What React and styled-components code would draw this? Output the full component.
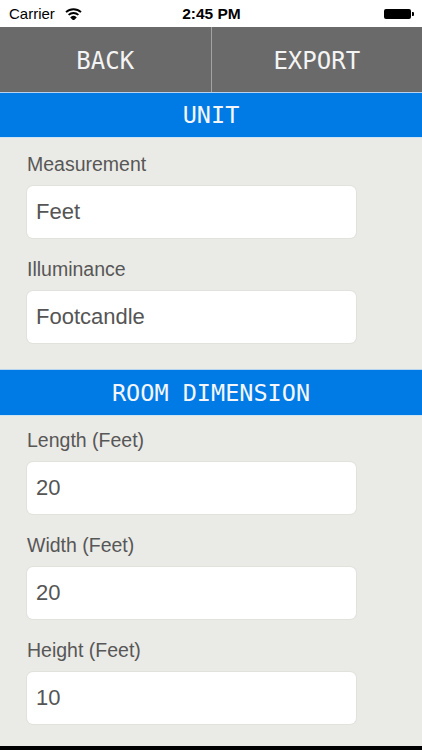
import React from "react";
import styled, { createGlobalStyle } from "styled-components";

const Global = createGlobalStyle`
  html, body { margin: 0; padding: 0; background: #000; }
  body { font-family: "Liberation Sans", Arial, sans-serif; }
  * { box-sizing: border-box; }
`;

const Screen = styled.div`
  width: 422px;
  height: 746px;
  overflow: hidden;
  background: #eaeae6;
  display: flex;
  flex-direction: column;
`;

const StatusBar = styled.div`
  height: 27px;
  flex: none;
  background: #fff;
  display: grid;
  grid-template-columns: 1fr auto 1fr;
  align-items: center;
  padding: 0 8px 0 9px;
  font-size: 15px;
  color: #000;
`;

const Carrier = styled.div`
  display: flex;
  align-items: center;
  gap: 10px;
`;

const Time = styled.div`
  font-weight: bold;
  font-size: 15.5px;
`;

const Battery = styled.div`
  justify-self: end;
  display: flex;
  align-items: center;
  gap: 1px;
`;

const BatteryBody = styled.div`
  width: 27px;
  height: 10px;
  background: #000;
  border-radius: 2px;
`;

const BatteryTip = styled.div`
  width: 2px;
  height: 4px;
  background: #000;
  border-radius: 0 1px 1px 0;
`;

const Toolbar = styled.div`
  height: 65px;
  flex: none;
  display: grid;
  grid-template-columns: 1fr 1px 1fr;
  background: #6a6a6a;
`;

const ToolButton = styled.button`
  border: none;
  background: transparent;
  color: #f4f4f4;
  font-family: "DejaVu Sans Mono", monospace;
  font-size: 24px;
  padding: 2px 0 0;
  display: flex;
  align-items: center;
  justify-content: center;
`;

const Divider = styled.div`
  background: #a3a3a3;
`;

const SectionHeader = styled.div`
  height: ${(p) => p.$h}px;
  flex: none;
  background: #007be6;
  color: #f4f6fa;
  font-family: "DejaVu Sans Mono", monospace;
  font-size: 23.5px;
  display: flex;
  align-items: center;
  justify-content: center;
  border-top: 1px solid #b4d3ee;
  border-bottom: 1px solid #cfe4f2;
`;

const Section = styled.div`
  padding: ${(p) => p.$top}px 27px ${(p) => p.$bottom}px;
  display: flex;
  flex-direction: column;
`;

const Field = styled.div`
  display: flex;
  flex-direction: column;
  & + & { margin-top: 19px; }
`;

const Label = styled.div`
  height: 24px;
  line-height: 24px;
  font-size: 19.5px;
  color: #575757;
  margin-bottom: 10px;
`;

const Input = styled.div`
  width: 329px;
  height: 52px;
  background: #fff;
  border-radius: 6px;
  box-shadow: 0 0 0 1px #e2e2dd;
  display: flex;
  align-items: center;
  padding: 0 9px;
  font-size: 22px;
  color: #555;
`;

const Wifi = () => (
  <svg width="17" height="12" viewBox="0 0 17 12">
    <path d="M1 4.2 A11 11 0 0 1 16 4.2" fill="none" stroke="#000" strokeWidth="1.8" />
    <path d="M3.6 6.9 A7.2 7.2 0 0 1 13.4 6.9" fill="none" stroke="#000" strokeWidth="1.8" />
    <path d="M6.1 9.4 A3.6 3.6 0 0 1 10.9 9.4 L8.5 11.8 Z" fill="#000" stroke="#000" strokeWidth="1.2" />
  </svg>
);

const unitFields = [
  ["Measurement", "Feet"],
  ["Illuminance", "Footcandle"],
];

const roomFields = [
  ["Length (Feet)", "20"],
  ["Width (Feet)", "20"],
  ["Height (Feet)", "10"],
];

export default function App() {
  return (
    <>
      <Global />
      <Screen>
        <StatusBar>
          <Carrier>
            Carrier <Wifi />
          </Carrier>
          <Time>2:45 PM</Time>
          <Battery>
            <BatteryBody />
            <BatteryTip />
          </Battery>
        </StatusBar>
        <Toolbar>
          <ToolButton>BACK</ToolButton>
          <Divider />
          <ToolButton>EXPORT</ToolButton>
        </Toolbar>
        <SectionHeader $h={46}>UNIT</SectionHeader>
        <Section $top={14} $bottom={26}>
          {unitFields.map(([l, v]) => (
            <Field key={l}>
              <Label>{l}</Label>
              <Input>{v}</Input>
            </Field>
          ))}
        </Section>
        <SectionHeader $h={47}>ROOM DIMENSION</SectionHeader>
        <Section $top={12} $bottom={20}>
          {roomFields.map(([l, v]) => (
            <Field key={l}>
              <Label>{l}</Label>
              <Input>{v}</Input>
            </Field>
          ))}
        </Section>
      </Screen>
    </>
  );
}
